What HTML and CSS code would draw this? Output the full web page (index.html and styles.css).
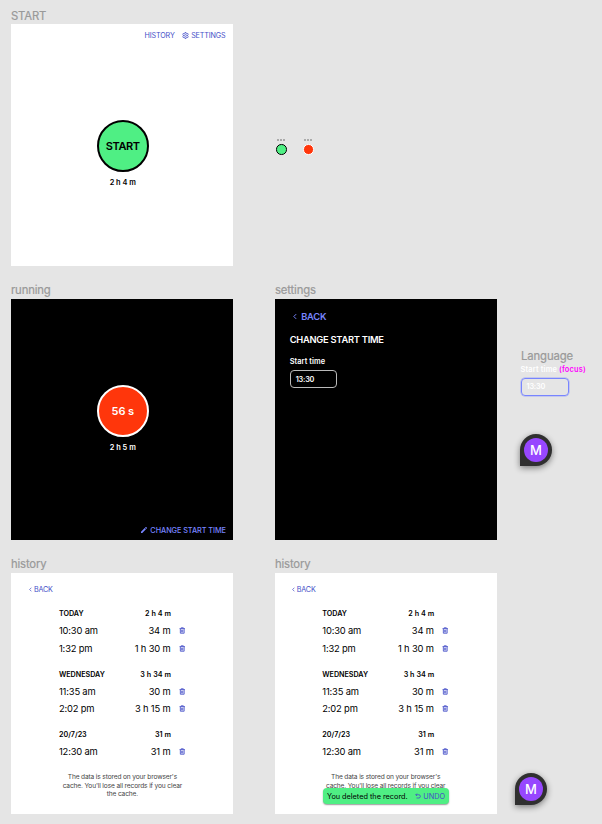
FILE: index.html
```html
<!DOCTYPE html>
<html lang="en">
<head>
<meta charset="utf-8">
<title>Time tracker screens</title>
<link rel="stylesheet" href="styles.css">
</head>
<body>
<svg width="0" height="0" class="defs">
  <symbol id="trash" viewBox="0 0 24 24"><path fill="none" stroke="currentColor" stroke-width="3.2" d="M2 5h20M8 4V2h8v2M5 6v16h14V6M10 9v10M14 9v10"/></symbol>
  <symbol id="chevron" viewBox="0 0 10 16"><path fill="none" stroke="currentColor" stroke-width="2.4" d="M8 2L2 8l6 6"/></symbol>
  <symbol id="gear" viewBox="0 0 24 24"><path fill="none" stroke="currentColor" stroke-width="2.8" stroke-linejoin="round" d="M9.5 5L10 2h4l.5 3 2 1.200 3-1.200 2 3.500-2.500 2v3l2.500 2-2 3.500-3-1.200-2 1.200-.5 3h-4l-.5-3-2-1.200-3 1.200-2-3.500 2.500-2v-3l-2.500-2 2-3.500 3 1.200z"/><circle cx="12" cy="12" r="3.200" fill="none" stroke="currentColor" stroke-width="2.400"/></symbol>
  <symbol id="pencil" viewBox="0 0 24 24"><path fill="currentColor" d="M3 17.200V21h3.800L17.800 9.900l-3.700-3.700zM20.700 7c.4-.4.4-1 0-1.400l-2.300-2.300a1 1 0 0 0-1.400 0l-1.800 1.800 3.700 3.700z"/></symbol>
  <symbol id="undo" viewBox="0 0 24 24"><path fill="none" stroke="currentColor" stroke-width="3.400" d="M8 2L3 7l5 5M3 7h12a6 6 0 0 1 0 13H6"/></symbol>
</svg>
<main class="canvas">
  <div class="title t-start">START</div>
  <section class="board light b-start">
    <nav class="nav"><a>HISTORY</a><a class="link"><svg class="i-gear"><use href="#gear"/></svg><span>SETTINGS</span></a></nav>
    <div class="timer"><div class="circle go">START</div><div class="total">2 h 4 m</div></div>
  </section>

  <div class="mini m-go"><span class="dots"><i></i><i></i><i></i></span><span class="dot green"></span></div>
  <div class="mini m-stop"><span class="dots"><i></i><i></i><i></i></span><span class="dot red"></span></div>

  <div class="title t-running">running</div>
  <section class="board dark b-running">
    <div class="timer"><div class="circle stop">56 s</div><div class="total">2 h 5 m</div></div>
    <a class="change"><svg class="i-pencil"><use href="#pencil"/></svg><span>CHANGE START TIME</span></a>
  </section>

  <div class="title t-settings">settings</div>
  <section class="board dark b-settings">
    <a class="back-large"><svg><use href="#chevron"/></svg><span>BACK</span></a>
    <h1>CHANGE START TIME</h1>
    <div class="label">Start time</div>
    <div class="input">13:30</div>
  </section>

  <div class="title t-language">Language</div>
  <div class="focus-field">
    <div class="label">Start time <span class="focus-note">(focus)</span></div>
    <div class="input focused">13:30</div>
  </div>
  <div class="pin p-top"><span>M</span></div>

  <div class="title t-history">history</div>
  <section class="board light b-history">
    <a class="back"><svg><use href="#chevron"/></svg><span>BACK</span></a>
    <div class="records">
      <div class="group">
        <div class="head"><span class="day">TODAY</span><span class="sum">2 h 4 m</span></div>
        <div class="row"><span class="time">10:30 am</span><span class="dur">34 m</span><svg><use href="#trash"/></svg></div>
        <div class="row"><span class="time">1:32 pm</span><span class="dur">1 h 30 m</span><svg><use href="#trash"/></svg></div>
      </div>
      <div class="group">
        <div class="head"><span class="day">WEDNESDAY</span><span class="sum">3 h 34 m</span></div>
        <div class="row"><span class="time">11:35 am</span><span class="dur">30 m</span><svg><use href="#trash"/></svg></div>
        <div class="row"><span class="time">2:02 pm</span><span class="dur">3 h 15 m</span><svg><use href="#trash"/></svg></div>
      </div>
      <div class="group">
        <div class="head"><span class="day">20/7/23</span><span class="sum">31 m</span></div>
        <div class="row"><span class="time">12:30 am</span><span class="dur">31 m</span><svg><use href="#trash"/></svg></div>
      </div>
    </div>
    <p class="note">The data is stored on your browser's<br>cache. You'll lose all records if you clear<br>the cache.</p>
  </section>

  <div class="title t-history2">history</div>
  <section class="board light b-history2">
    <a class="back"><svg><use href="#chevron"/></svg><span>BACK</span></a>
    <div class="records">
      <div class="group">
        <div class="head"><span class="day">TODAY</span><span class="sum">2 h 4 m</span></div>
        <div class="row"><span class="time">10:30 am</span><span class="dur">34 m</span><svg><use href="#trash"/></svg></div>
        <div class="row"><span class="time">1:32 pm</span><span class="dur">1 h 30 m</span><svg><use href="#trash"/></svg></div>
      </div>
      <div class="group">
        <div class="head"><span class="day">WEDNESDAY</span><span class="sum">3 h 34 m</span></div>
        <div class="row"><span class="time">11:35 am</span><span class="dur">30 m</span><svg><use href="#trash"/></svg></div>
        <div class="row"><span class="time">2:02 pm</span><span class="dur">3 h 15 m</span><svg><use href="#trash"/></svg></div>
      </div>
      <div class="group">
        <div class="head"><span class="day">20/7/23</span><span class="sum">31 m</span></div>
        <div class="row"><span class="time">12:30 am</span><span class="dur">31 m</span><svg><use href="#trash"/></svg></div>
      </div>
    </div>
    <p class="note">The data is stored on your browser's<br>cache. You'll lose all records if you clear</p>
    <div class="toast"><span class="message">You deleted the record.</span><a><svg><use href="#undo"/></svg><span>UNDO</span></a></div>
  </section>
  <div class="pin p-bottom"><span>M</span></div>
</main>
</body>
</html>
```

FILE: styles.css
```css
* { box-sizing: border-box; }
body { margin: 0; background: #e5e5e5; font-family: Inter, sans-serif; color: #000; }
svg { display: block; flex: none; }
.defs { position: absolute; }
.canvas { position: relative; width: 602px; height: 824px; overflow: hidden; white-space: nowrap; }

/* Artboards on the free canvas */
.title { position: absolute; font-size: 11.3px; line-height: 14px; color: #999; letter-spacing: -.15px; -webkit-text-stroke: .2px #999; }
.t-start { left: 11px; top: 9px; }
.t-running { left: 11px; top: 283px; }
.t-settings { left: 275px; top: 283px; }
.t-language { left: 521px; top: 349px; letter-spacing: -.1px; }
.t-history { left: 11px; top: 557px; }
.t-history2 { left: 275px; top: 557px; }
.board { position: absolute; width: 222px; height: 241.5px; display: flex; flex-direction: column; }
.light { background: #fff; }
.dark { background: #000; color: #fff; }
.b-start { left: 11.4px; top: 24.4px; }
.b-running { left: 11.4px; top: 298.6px; }
.b-settings { left: 274.7px; top: 298.6px; }
.b-history { left: 11.4px; top: 572.6px; }
.b-history2 { left: 274.7px; top: 572.6px; }

.nav { display: flex; justify-content: flex-end; gap: 7.5px; padding: 6.2px 7.9px 0 0; height: 16.2px; font-size: 7.2px; line-height: 10px; color: #4550c8; letter-spacing: -.15px; }
.link { display: flex; align-items: center; height: 10px; gap: 2px; }
.i-gear { width: 7px; height: 7px; }
.timer { margin: 79.5px 0 0 .8px; display: flex; flex-direction: column; align-items: center; }
.b-running .timer { margin-top: 86px; }
.circle { width: 52px; height: 52px; border-radius: 50%; display: flex; align-items: center; justify-content: center; font-weight: 600; }
.go { border: 2px solid #000; background: #4fef84; font-size: 11px; letter-spacing: -.4px; }
.stop { border: 2px solid #fff; background: #ff360b; font-size: 11px; font-weight: 600; letter-spacing: -.1px; }
.total { margin-top: 6px; font-size: 7.4px; line-height: 10px; font-weight: 600; }
.change { display: flex; align-items: center; justify-content: flex-end; gap: 2px; margin: auto 7.5px 5px 0; height: 10px; color: #7885ff; font-size: 7.3px; font-weight: 500; letter-spacing: -.06px; }
.i-pencil { width: 8px; height: 8px; }

.mini { position: absolute; top: 138.5px; width: 12px; display: flex; flex-direction: column; align-items: center; gap: 3.5px; }
.m-go { left: 275.3px; }
.m-stop { left: 302.3px; }
.dots { display: flex; gap: 1px; }
.dots i { width: 2px; height: 2px; background: #aaa; }
.dot { width: 10.5px; height: 10.5px; border-radius: 50%; border: 1px solid #000; }
.green { background: #4fef84; }
.red { background: #ff360b; border-color: #fff; }

.b-settings { padding-left: 15px; }
.back-large { display: flex; align-items: center; gap: 4.5px; margin: 11px 0 0 3px; height: 13px; color: #7885ff; font-size: 9.3px; font-weight: 600; letter-spacing: -.2px; }
.back-large svg { width: 4px; height: 7px; }
h1 { margin: 10.5px 0 0; font-size: 9.3px; line-height: 13px; font-weight: 600; letter-spacing: -.24px; }
.label { font-size: 7.4px; line-height: 10px; font-weight: 600; letter-spacing: .07px; }
.b-settings .label { margin-top: 11px; }
.input { display: flex; align-items: center; width: 47.5px; height: 18px; margin-top: 3px; padding-left: 5px; border: 1px solid #bbb; border-radius: 4px; font-size: 7.3px; font-weight: 600; letter-spacing: -.2px; }
.focus-field { position: absolute; left: 520.5px; top: 364.5px; color: #fff; }
.focus-field .label { letter-spacing: .17px; }
.focus-note { color: #f0f; }
.focused { width: 48.5px; border: 1px solid #7885ff; box-shadow: 0 0 0 .5px #7885ff99; }

.pin { position: absolute; width: 32px; height: 32px; border-radius: 50% 50% 50% 0; background: #303030; padding: 4px; box-shadow: 0 2px 6px #0007; }
.pin span { display: flex; align-items: center; justify-content: center; width: 24px; height: 24px; border-radius: 50%; background: #9747ff; color: #fff; font-size: 13px; font-weight: 500; }
.p-top { left: 520px; top: 434px; }
.p-bottom { left: 515px; top: 773px; }

.back { display: flex; align-items: center; gap: 2px; height: 10px; margin: 11.5px 0 0 17.5px; color: #4550c8; font-size: 7.2px; letter-spacing: -.15px; }
.back svg { width: 3px; height: 5px; }
.b-history2 .back { margin-left: 17px; }
.records { margin: 11.8px 0 0 47.6px; width: 127px; display: flex; flex-direction: column; gap: 9.3px; }
.head { display: flex; align-items: center; justify-content: space-between; height: 16px; padding-right: 15px; font-size: 7.2px; font-weight: 600; }
.day { letter-spacing: -.03px; }
.sum { letter-spacing: .05px; }
.row { display: flex; align-items: center; height: 17.6px; font-size: 9.4px; letter-spacing: -.18px; }
.dur { margin-left: auto; }
.row svg { width: 6.5px; height: 7px; margin: 0 .5px 0 8.500px; color: #4550c8; }
.note { margin: 12.6px 0 0; text-align: center; font-size: 6.6px; line-height: 8.500px; color: #444; letter-spacing: -.14px; }
.toast { position: absolute; left: 48.3px; top: 215.9px; width: 126px; height: 15.5px; border-radius: 4px; background: #4fef84; box-shadow: 0 1px 1.5px #0006; padding: 0 4px; display: flex; align-items: center; justify-content: space-between; font-size: 7.3px; }
.toast a { display: flex; align-items: center; gap: 2px; color: #4550c8; }
.toast svg { width: 6px; height: 6px; }
```
